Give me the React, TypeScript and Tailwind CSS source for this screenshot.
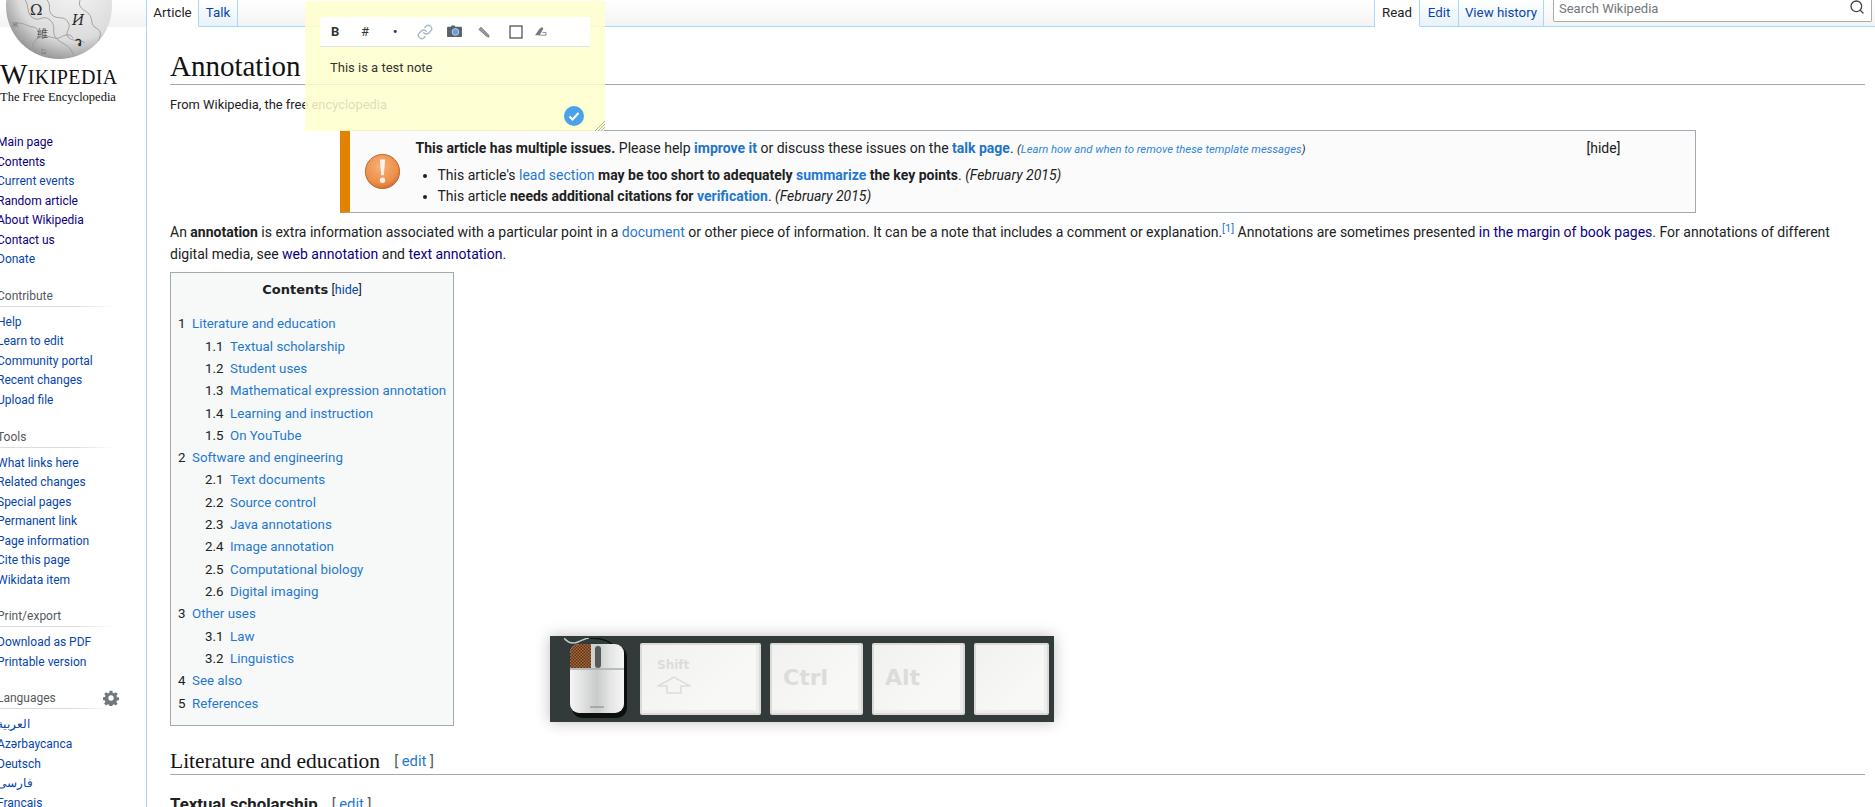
import React from 'react';
import { Link, Search } from 'lucide-react';

const VISITED = 'text-[#0b0080]';
const LINK = 'text-[#0645ad]';

const navGroups = [
    {
        title: '',
        items: [
            ['Main page', VISITED], ['Contents', VISITED], ['Current events', LINK], ['Random article', VISITED],
            ['About Wikipedia', VISITED], ['Contact us', VISITED], ['Donate', LINK],
        ],
    },
    {
        title: 'Contribute',
        items: [['Help', LINK], ['Learn to edit', LINK], ['Community portal', LINK], ['Recent changes', LINK], ['Upload file', LINK]],
    },
    {
        title: 'Tools',
        items: [
            ['What links here', LINK], ['Related changes', LINK], ['Special pages', LINK], ['Permanent link', LINK],
            ['Page information', LINK], ['Cite this page', LINK], ['Wikidata item', LINK],
        ],
    },
    {
        title: 'Print/export',
        items: [['Download as PDF', LINK], ['Printable version', LINK]],
    },
    {
        title: 'Languages',
        items: [['العربية', LINK], ['Azərbaycanca', LINK], ['Deutsch', LINK], ['فارسی', LINK], ['Français', LINK]],
    },
];

const tocItems = [
    ['1', 'Literature and education', 0], ['1.1', 'Textual scholarship', 1], ['1.2', 'Student uses', 1],
    ['1.3', 'Mathematical expression annotation', 1], ['1.4', 'Learning and instruction', 1], ['1.5', 'On YouTube', 1],
    ['2', 'Software and engineering', 0], ['2.1', 'Text documents', 1], ['2.2', 'Source control', 1],
    ['2.3', 'Java annotations', 1], ['2.4', 'Image annotation', 1], ['2.5', 'Computational biology', 1],
    ['2.6', 'Digital imaging', 1], ['3', 'Other uses', 0], ['3.1', 'Law', 1], ['3.2', 'Linguistics', 1],
    ['4', 'See also', 0], ['5', 'References', 0],
] as const;

const Globe = () => (
    <svg viewBox="0 0 118 62" className="absolute left-0 top-0 w-[118px] h-[62px]">
        <defs>
            <radialGradient id="globe" cx="62%" cy="30%" r="75%">
                <stop offset="0" stopColor="#f6f6f6" />
                <stop offset="0.7" stopColor="#dcdcdc" />
                <stop offset="1" stopColor="#8f8f8f" />
            </radialGradient>
        </defs>
        <circle cx="59" cy="6" r="53" fill="url(#globe)" />
        <g fill="none" stroke="#9b9b9b" strokeWidth="0.9">
            <path d="M24 -2c6 8 2 16 9 20s10-4 17 2 1 12 6 18 14 6 18 18" />
            <path d="M47 0c5 6 0 10 5 15s12 0 16 7-4 10 0 15 12 2 17 6" />
            <path d="M15 24c8-3 12 3 18 3s8 9 2 14 1 11 8 15" />
            <path d="M80 0c-3 8 5 10 9 14s1 11 7 14 5 8 2 13" />
            <path d="M43 38c6-4 12 2 16 0s10-6 14 0" />
        </g>
        <g fill="#2b2b2b" fontFamily="'Noto Sans CJK SC', 'DejaVu Sans', serif">
            <text x="30" y="15" fontSize="15" fontFamily="'DejaVu Serif', serif">Ω</text>
            <text x="72" y="25" fontSize="14" fontFamily="'DejaVu Serif', serif" fontStyle="italic">И</text>
            <text x="37" y="38" fontSize="11" fill="#555">維</text>
            <text x="75" y="46" fontSize="12" fontWeight="700">ว</text>
            <text x="41" y="54" fontSize="8" fill="#777">ಬ</text>
            <text x="12" y="27" fontSize="8" fill="#777">ж</text>
        </g>
    </svg>
);

const Sidebar = () => (
    <aside className="relative w-[146px] shrink-0 overflow-hidden bg-white bg-[linear-gradient(#ffffff,#f3f3f3)] bg-no-repeat bg-[length:100%_27px] font-['Roboto',sans-serif] text-[12px]">
        <Globe />
        <div className="h-[133px] pt-[59px] font-['Liberation_Serif',serif] text-[#111]">
            <div className="text-[29px] leading-[30px] [font-variant:small-caps] tracking-[0.4px] whitespace-nowrap">Wikipedia</div>
            <div className="text-[12.500px] leading-[16px] whitespace-nowrap">The Free Encyclopedia</div>
        </div>
        <nav className="-ml-[3px] flex flex-col gap-[16px]">
            {navGroups.map((group) => (
                <div key={group.title}>
                    {group.title && (
                        <div className="relative h-[21px] w-[118px] bg-[linear-gradient(to_right,#dcdcdc_65%,transparent)] bg-no-repeat bg-bottom bg-[length:100%_1px] pt-[1px] leading-[19px] text-[#54595d]">
                            {group.title}
                            {group.title === 'Languages' && (
                                <svg viewBox="0 0 24 24" className="absolute right-[-4px] top-[2px] h-[16px] w-[16px]" fill="#72777d">
                                    <path d="M10 1h4l.6 3.2 2 .8L19.300 3.200l2.800 2.800-1.900 2.700.9 2 3 .6v4l-3.200.6-.8 2 1.800 2.700-2.800 2.800-2.700-1.900-2 .9-.6 3h-4l-.6-3.200-2-.8-2.700 1.800-2.800-2.800 1.900-2.700-.9-2-3-.6v-4l3.200-.6.8-2L1.900 6 4.700 3.200l2.700 1.900 2-.9zM12 8a4 4 0 100 8 4 4 0 000-8z" fillRule="evenodd" />
                                </svg>
                            )}
                        </div>
                    )}
                    <ul className={group.title ? 'pt-[6px]' : ''}>
                        {group.items.map(([label, color]) => (
                            <li key={label} className={`h-[19.55px] leading-[19.55px] whitespace-nowrap ${color}`}>{label}</li>
                        ))}
                    </ul>
                </div>
            ))}
        </nav>
    </aside>
);

const Tab = ({ label, width, active }: { label: string; width: string; active?: boolean }) => (
    <div
        className={`flex h-[27px] ${width} items-center justify-center border-r border-[#a7d7f9] text-[13.300px] ${
            active
                ? 'border-b border-b-white bg-white text-[#222]'
                : 'border-b border-b-[#a7d7f9] bg-[linear-gradient(#ffffff,#e8f2f8)] text-[#0645ad]'
        }`}
    >
        {label}
    </div>
);

const PageHeader = () => (
    <header className="flex h-[27px] justify-between border-b border-[#a7d7f9] bg-[linear-gradient(#ffffff,#f3f3f3)]">
        <div className="flex">
            <Tab label="Article" width="w-[52px]" active />
            <Tab label="Talk" width="w-[39px]" />
        </div>
        <div className="flex">
            <div className="flex border-l border-[#a7d7f9]">
                <Tab label="Read" width="w-[45px]" active />
                <Tab label="Edit" width="w-[39px]" />
                <Tab label="View history" width="w-[85px]" />
            </div>
            <div className="ml-[9px] mr-[3px] flex h-[22px] w-[319px] items-center justify-between rounded-b-[2px] border border-t-0 border-[#aaaaaa] bg-white pl-[5px] pr-[6px] text-[13px] text-[#72777d]">
                <span className="-mt-[4px]">Search Wikipedia</span>
                <Search className="-mt-[8px] h-[16px] w-[16px] text-[#444]" strokeWidth={2} />
            </div>
        </div>
    </header>
);

const WarningIcon = () => (
    <svg viewBox="0 0 40 40" className="h-[37px] w-[37px] shrink-0">
        <defs>
            <radialGradient id="warn" cx="45%" cy="35%" r="70%">
                <stop offset="0" stopColor="#f6b27c" />
                <stop offset="0.7" stopColor="#ee8e48" />
                <stop offset="1" stopColor="#c96a2a" />
            </radialGradient>
        </defs>
        <circle cx="20" cy="20" r="18.500" fill="url(#warn)" stroke="#b5642c" strokeWidth="1" />
        <path d="M17.200 7h5.600l-1.400 17h-2.800z" fill="#fdf3ea" />
        <circle cx="20" cy="29.500" r="2.900" fill="#fdf3ea" />
    </svg>
);

const IssueBox = () => (
    <div className="mx-auto mt-[16px] flex h-[83px] w-[1356px] border border-l-[10px] border-[#a2a9b1] border-l-[#e38100] bg-[#fbfbfb] text-[14px]">
        <div className="flex w-[66px] shrink-0 items-center justify-center pb-[1px]">
            <WarningIcon />
        </div>
        <div className="flex-1 pt-[7px] leading-[21px]">
            <div className="flex">
                <p className="whitespace-nowrap">
                    <b>This article has multiple issues.</b> Please help <b className="text-[#1f74c9]">improve it</b> or discuss these issues on the{' '}
                    <b className="text-[#1f74c9]">talk page</b>. <span className="text-[11.300px] italic">(<span className="text-[#2f86db]">Learn how and when to remove these template messages</span>)</span>
                </p>
                <span className="ml-[281px]">[hide]</span>
            </div>
            <ul className="mt-[5px] list-disc pl-[22px]">
                <li>
                    This article's <span className="text-[#1f78d1]">lead section</span> <b>may be too short to adequately</b>{' '}
                    <b className="text-[#1f78d1]">summarize</b> <b>the key points</b>. <i>(February 2015)</i>
                </li>
                <li>
                    This article <b>needs additional citations for</b> <b className="text-[#1f78d1]">verification</b>. <i>(February 2015)</i>
                </li>
            </ul>
        </div>
    </div>
);

const Contents = () => (
    <div className="mt-[7px] h-[454px] w-[284px] border border-[#a2a9b1] bg-[#f7f9f8] text-[13.300px] text-[#202122]">
        <div className="pt-[6px] text-center leading-[21px]">
            <b className="font-['DejaVu_Sans',sans-serif] text-[13px] font-bold">Contents</b>{' '}
            <span className="text-[12.500px]">[<span className="text-[#0645ad]">hide</span>]</span>
        </div>
        <ul className="mt-[13px]">
            {tocItems.map(([num, label, level]) => (
                <li key={num} className={`flex h-[22.330px] items-center whitespace-nowrap ${level ? 'pl-[34px]' : 'pl-[7px]'}`}>
                    <span className={level ? 'w-[25px]' : 'w-[14px]'}>{num}</span>
                    <span className="text-[#1f78d1]">{label}</span>
                </li>
            ))}
        </ul>
    </div>
);

const EditLink = () => (
    <span className="ml-[14px] text-[14.800px] text-[#54595d]">
        [ <span className="text-[#1f78d1]">edit</span> ]
    </span>
);

const Article = () => (
    <div className="pl-[23px] pr-[10px] text-[14px] text-[#202122]">
        <h1 className="h-[58px] border-b border-[#a2a9b1] pt-[20px] font-['Liberation_Serif',serif] text-[29px] leading-[38px] text-[#111]">Annotation</h1>
        <div className="mt-[10px] text-[12.900px] leading-[20px]">From Wikipedia, the free encyclopedia</div>
        <div className="-mt-[1px]">
            <IssueBox />
        </div>
        <p className="mt-[8px] leading-[22px]">
            An <b>annotation</b> is extra information associated with a particular point in a <span className="text-[#1f78d1]">document</span> or other piece of
            information. It can be a note that includes a comment or explanation.
            <sup className="text-[11px] text-[#1f78d1]">[1]</sup> Annotations are sometimes presented{' '}
            <span className={VISITED}>in the margin of book pages</span>. For annotations of different digital media, see{' '}
            <span className={VISITED}>web annotation</span> and <span className={VISITED}>text annotation</span>.
        </p>
        <Contents />
        <h2 className="mt-[21px] flex h-[28px] items-center border-b border-[#a2a9b1] pt-[1px] leading-[30px]">
            <span className="font-['Liberation_Serif',serif] text-[21.500px] text-[#111]">Literature and education</span>
            <EditLink />
        </h2>
        <h3 className="mt-[17px] flex items-center leading-[24px]">
            <span className="text-[16.800px] font-bold">Textual scholarship</span>
            <EditLink />
        </h3>
    </div>
);

const NoteToolbarIcons = () => (
    <div className="flex h-[30px] items-center border-b border-[#e3e3e3] bg-white pl-[10px] text-[#333]">
        <span className="flex w-[30px] justify-start pl-[1px] text-[13px] font-bold">B</span>
        <span className="flex w-[30px] justify-start pl-[1px] text-[13px]">#</span>
        <span className="flex w-[30px] justify-start pl-[3px] text-[12px] font-bold">•</span>
        <span className="w-[30px]"><Link className="-ml-[3px] h-[16px] w-[16px] text-[#a4b8c8]" strokeWidth={2} /></span>
        <span className="w-[30px]">
            <svg viewBox="0 0 16 14" className="-ml-[3px] h-[13px] w-[15px]">
                <path d="M1 2h3l1-1.500h3L9 2h6a1 1 0 011 1v9a1 1 0 01-1 1H1a1 1 0 01-1-1V3a1 1 0 011-1z" fill="#56616b" />
                <circle cx="9" cy="7.500" r="3.600" fill="#6a9fd4" stroke="#c4d3e0" strokeWidth="1" />
            </svg>
        </span>
        <span className="w-[30px]">
            <svg viewBox="0 0 14 14" className="-ml-[2px] h-[12px] w-[12px]">
                <path d="M1 4l2.500-2.500 8.500 8.500 1 3-3-1z" fill="#9a9a9a" stroke="#666" strokeWidth="0.8" />
            </svg>
        </span>
        <span className="w-[30px]">
            <svg viewBox="0 0 14 14" className="-ml-[1px] h-[14px] w-[14px]">
                <rect x="1" y="1" width="12" height="12" fill="none" stroke="#444" strokeWidth="1.200" />
            </svg>
        </span>
        <span className="w-[30px]">
            <svg viewBox="0 0 14 12" className="-ml-[6px] h-[11px] w-[13px]">
                <path d="M6 10h7V7H9" fill="none" stroke="#777" strokeWidth="0.9" />
                <path d="M1 10l5-7 3-2 1 2-4 7z" fill="#777" />
            </svg>
        </span>
    </div>
);

const StickyNote = () => (
    <div className="absolute left-[305px] top-[1px] h-[130px] w-[300px] bg-[#ffffcc]/85 px-[15px] pt-[16px] font-['Roboto',sans-serif]">
        <NoteToolbarIcons />
        <div className="pl-[10px] pt-[12px] text-[13px] leading-[18px] text-[#333]">This is a test note</div>
        <svg viewBox="0 0 20 20" className="absolute right-[21px] bottom-[5px] h-[20px] w-[20px]">
            <circle cx="10" cy="10" r="10" fill="#4aa3ea" />
            <path d="M5.500 10.500l3 3 6-6.500" fill="none" stroke="#fff" strokeWidth="2" />
        </svg>
        <svg viewBox="0 0 10 10" className="absolute right-0 bottom-0 h-[10px] w-[10px]">
            <path d="M0 10L10 0M3 10l7-7M6 10l4-4M9 10l1-1" stroke="#999" strokeWidth="0.8" />
        </svg>
    </div>
);

const Mouse = () => (
    <svg viewBox="0 0 64 82" className="h-[82px] w-[64px] shrink-0">
        <defs>
            <pattern id="weave" width="3" height="3" patternUnits="userSpaceOnUse">
                <rect width="3" height="3" fill="#b9682a" />
                <path d="M0 0h1.500v1.500H0zM1.500 1.500H3V3H1.500z" fill="#4a3528" />
            </pattern>
            <linearGradient id="shell" x1="0" x2="1" y1="0" y2="0">
                <stop offset="0" stopColor="#f5f5f5" />
                <stop offset="0.5" stopColor="#c9cccb" />
                <stop offset="0.75" stopColor="#e4e6e5" />
                <stop offset="1" stopColor="#f5f5f5" />
            </linearGradient>
        </defs>
        <path d="M0 0c4 5 9 6 14 4s8-4 11-4" fill="none" stroke="#c4c8c7" strokeWidth="1.500" />
        <path d="M25 0c12 0 20 2 24 8" fill="none" stroke="#111" strokeWidth="1.500" />
        <rect x="8" y="8" width="55" height="72" rx="10" fill="#0d0f0f" />
        <rect x="6" y="6" width="54" height="69" rx="9" fill="url(#shell)" />
        <path d="M6 15a9 9 0 019-9h12v24H6z" fill="url(#weave)" />
        <rect x="31" y="8" width="6" height="22" rx="3" fill="#55595a" />
        <path d="M6 31h54" stroke="#a9adac" strokeWidth="1.500" />
        <path d="M26 69h14" stroke="#9a9e9d" strokeWidth="1.500" />
    </svg>
);

const Key = ({ width, children }: { width: string; children?: React.ReactNode }) => (
    <div className={`${width} relative h-[72px] rounded-[2px] border-2 border-[#dadad8] bg-[linear-gradient(135deg,#f1f1f0,#f8f8f7_70%)] p-[8px] font-['DejaVu_Sans',sans-serif] font-bold text-[#dcdcda] shadow-[inset_-3px_-3px_0_#ededeb]`}>
        {children}
    </div>
);

const KeyOverlay = () => (
    <div className="absolute left-[550px] top-[636px] flex h-[86px] w-[504px] items-center bg-[#323a3a] pl-[14px] shadow-[0_0_14px_rgba(0,0,0,0.25)]">
        <Mouse />
        <div className="ml-[12px] flex gap-[9px]">
            <Key width="w-[121px]">
                <div className="pl-[7px] pt-[5px] text-[12px] leading-[14px]">Shift</div>
                <svg viewBox="0 0 34 18" className="ml-[7px] mt-[4px] h-[18px] w-[34px]">
                    <path d="M1 10L17 1l16 9h-9v7H10v-7z" fill="none" stroke="#dcdcda" strokeWidth="1.500" />
                </svg>
            </Key>
            <Key width="w-[93px]">
                <div className="pl-[3px] pt-[13px] text-[22px] leading-[24px]">Ctrl</div>
            </Key>
            <Key width="w-[93px]">
                <div className="pl-[3px] pt-[13px] text-[22px] leading-[24px]">Alt</div>
            </Key>
            <Key width="w-[75px]" />
        </div>
    </div>
);

const App = () => (
    <div className="relative flex h-[807px] w-[1875px] overflow-hidden bg-white font-['Roboto',sans-serif]">
        <Sidebar />
        <main className="flex-1 border-l border-[#a7d7f9]">
            <PageHeader />
            <Article />
        </main>
        <StickyNote />
        <KeyOverlay />
    </div>
);

export default App;
